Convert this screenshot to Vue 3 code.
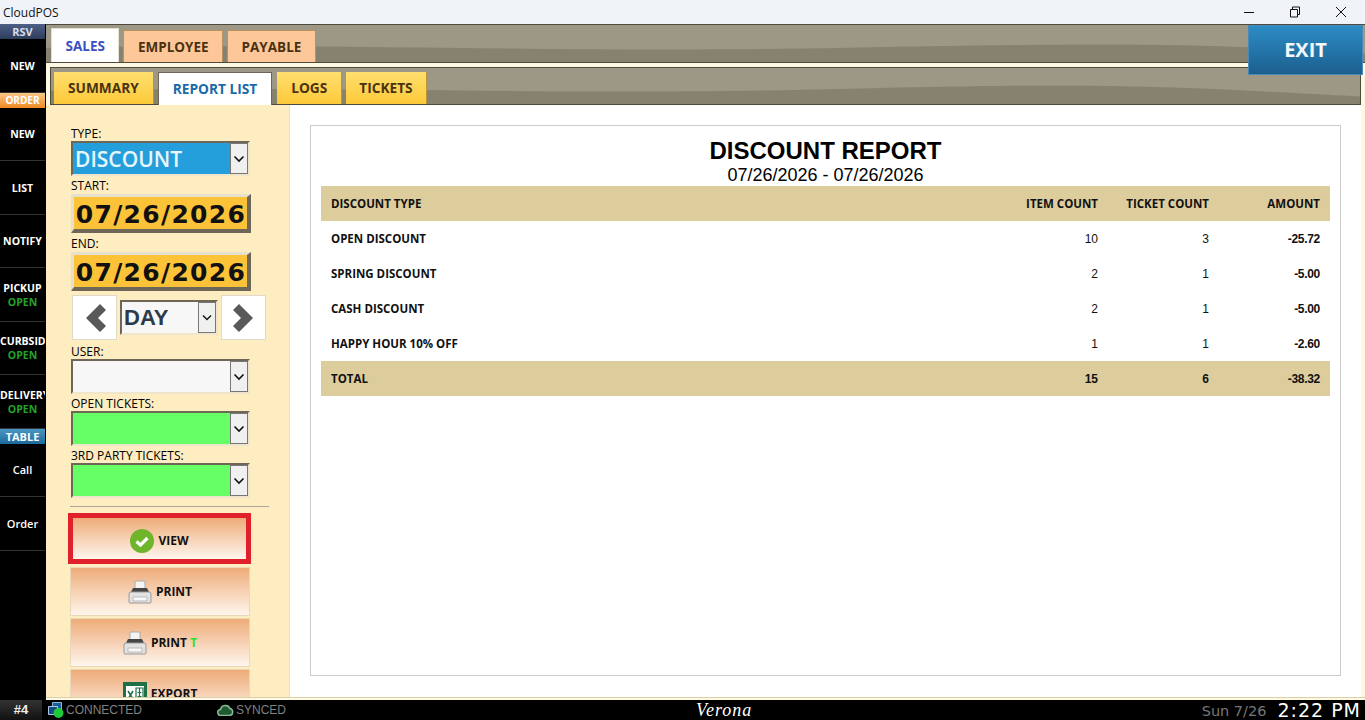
<template>
  <div class="app">
    <div class="titlebar">
      <span class="title">CloudPOS</span>
      <div class="winBtns">
        <svg width="12" height="12" viewBox="0 0 12 12"><path d="M1 6.5h10" stroke="#111" fill="none" /></svg>
        <svg width="12" height="12" viewBox="0 0 12 12"><path d="M1.5 3.5h7a1 1 0 0 1 0 0v7.5h-7zM3.5 3.5v-2.5h7v7.5h-2" stroke="#111" fill="none" /></svg>
        <svg width="12" height="12" viewBox="0 0 12 12"><path d="M1 1l10 10M11 1L1 11" stroke="#111" fill="none" /></svg>
      </div>
    </div>

    <div class="main">
      <div class="sidebar">
        <template v-for="item in sideItems" :key="item.id">
          <div v-if="item.head" class="sideHead" :class="item.head">{{ item.label }}</div>
          <div v-else class="sideItem" :class="{ plain: item.plain }">
            <span class="sideLabel">{{ item.label }}</span>
            <span v-if="item.open" class="sideLabel open">OPEN</span>
          </div>
        </template>
      </div>

      <div class="workspace">
        <div class="barTop">
          <svg class="wave" viewBox="0 0 1315 39" preserveAspectRatio="none"><path d="M0 24C300 18 500 30 800 24S1150 20 1315 30V39H0z" fill="#878170" /></svg>
          <div class="tab" :class="{ active: t === 'SALES', sales: t === 'SALES' }" v-for="t in topTabs" :key="t">{{ t }}</div>
        </div>

        <div class="barSub">
          <svg class="wave" viewBox="0 0 1311 38" preserveAspectRatio="none"><path d="M0 24C300 18 500 30 800 22S1150 22 1311 30V38H0z" fill="#878170" /></svg>
          <div class="subTab" :class="{ active: t === 'REPORT LIST' }" v-for="t in subTabs" :key="t">{{ t }}</div>
        </div>

        <button class="exit">EXIT</button>

        <div class="body">
          <div class="filters">
            <label>TYPE:</label>
            <div class="combo selected">
              <span class="comboText">DISCOUNT</span>
              <span class="arrow"><svg width="12" height="8" viewBox="0 0 12 8"><path d="M1.5 1.5L6 6l4.5-4.5" stroke="#111" stroke-width="1.6" fill="none" /></svg></span>
            </div>
            <label class="start">START:</label>
            <div class="date">07/26/2026</div>
            <label class="end">END:</label>
            <div class="date">07/26/2026</div>

            <div class="stepper">
              <button class="stepBtn">
                <svg width="24" height="32" viewBox="0 0 24 32"><path d="M17 2L3 16l14 14 6-6-8-8 8-8z" fill="#595959" /></svg>
              </button>
              <div class="combo day">
                <span class="comboText">DAY</span>
                <span class="arrow"><svg width="12" height="8" viewBox="0 0 12 8"><path d="M2 1.5L6 5.5l4-4" stroke="#111" stroke-width="1.4" fill="none" /></svg></span>
              </div>
              <button class="stepBtn">
                <svg width="24" height="32" viewBox="0 0 24 32"><path d="M7 2l14 14L7 30l-6-6 8-8-8-8z" fill="#595959" /></svg>
              </button>
            </div>

            <template v-for="f in extraFilters" :key="f.label">
              <label class="extra">{{ f.label }}</label>
              <div class="combo" :class="{ green: f.green }">
                <span class="comboText"></span>
                <span class="arrow"><svg width="12" height="8" viewBox="0 0 12 8"><path d="M1.5 1.5L6 6l4.5-4.5" stroke="#111" stroke-width="1.6" fill="none" /></svg></span>
              </div>
            </template>

            <hr class="rule">

            <button class="action view">
              <svg width="24" height="24" viewBox="0 0 24 24">
                <circle cx="12" cy="12" r="12" fill="#6fb52c" />
                <path d="M6.5 12.5l4 3.5 7-7" stroke="#fff" stroke-width="3.2" fill="none" />
              </svg>
              VIEW
            </button>
            <button class="action">
              <svg width="24" height="24" viewBox="0 0 24 24">
                <path d="M7 1h10v9H7z" fill="#f4f4f4" stroke="#aaa" />
                <path d="M5 8h14l2 4H3z" fill="#444" />
                <path d="M1 14a2 2 0 0 1 2-2h18a2 2 0 0 1 2 2v8a1 1 0 0 1-1 1H2a1 1 0 0 1-1-1z" fill="#e2e2e2" stroke="#999" />
                <path d="M5 17h14v4H5z" fill="#f8f8f8" stroke="#bbb" />
              </svg>
              PRINT
            </button>
            <button class="action">
              <svg width="24" height="24" viewBox="0 0 24 24">
                <path d="M7 1h10v9H7z" fill="#f4f4f4" stroke="#aaa" />
                <path d="M5 8h14l2 4H3z" fill="#444" />
                <path d="M1 14a2 2 0 0 1 2-2h18a2 2 0 0 1 2 2v8a1 1 0 0 1-1 1H2a1 1 0 0 1-1-1z" fill="#e2e2e2" stroke="#999" />
                <path d="M5 17h14v4H5z" fill="#f8f8f8" stroke="#bbb" />
              </svg>
              <span>PRINT <span class="greenT">T</span></span>
            </button>
            <button class="action">
              <svg width="24" height="24" viewBox="0 0 24 24">
                <path d="M0 0h24v24H0z" fill="#1e7145" />
                <path d="M3 4h18v18H3z" fill="#fff" />
                <path d="M13 6h7v14h-7zM14.500 10.500h4M14.500 14.500h4M16.500 6v14" fill="none" stroke="#1e7145" stroke-width="1.200" />
                <path d="M5 9l5 8M10 9l-5 8" stroke="#1e7145" stroke-width="1.600" fill="none" />
              </svg>
              EXPORT
            </button>
          </div>

          <div class="reportArea">
            <div class="report">
              <h1>DISCOUNT REPORT</h1>
              <div class="range">07/26/2026 - 07/26/2026</div>
              <table>
                <thead>
                  <tr>
                    <th class="name">DISCOUNT TYPE</th>
                    <th class="c1">ITEM COUNT</th>
                    <th class="c2">TICKET COUNT</th>
                    <th class="c3">AMOUNT</th>
                  </tr>
                </thead>
                <tbody>
                  <tr v-for="r in rows" :key="r.name">
                    <td class="name">{{ r.name }}</td>
                    <td class="c1 num">{{ r.items }}</td>
                    <td class="c2 num">{{ r.tickets }}</td>
                    <td class="c3 amt">{{ r.amount }}</td>
                  </tr>
                </tbody>
                <tfoot>
                  <tr>
                    <td class="name">TOTAL</td>
                    <td class="c1 tot">15</td>
                    <td class="c2 tot">6</td>
                    <td class="c3 amt">-38.32</td>
                  </tr>
                </tfoot>
              </table>
            </div>
          </div>
        </div>
      </div>
    </div>

    <div class="footer">
      <div class="station">#4</div>
      <svg class="connIcon" width="16" height="16" viewBox="0 0 16 16">
        <path d="M4.500 .5h9v8h-9z" fill="#1c5d9c" stroke="#8fb6dc" />
        <path d="M.5 4.500h9v8h-9z" fill="#174a80" stroke="#a8c8e8" />
        <circle cx="10.500" cy="11" r="5" fill="#1fc93a" />
      </svg>
      <span class="conn">CONNECTED</span>
      <svg class="cloud" width="17" height="12" viewBox="0 0 17 12"><path d="M4 11.500a3 3 0 0 1-.5-6 5 5 0 0 1 9.500-1 3.600 3.600 0 0 1 0 7z" fill="#1e5c30" stroke="#8ab898" stroke-width="1.500" /></svg>
      <span class="conn">SYNCED</span>
      <span class="venue">Verona</span>
      <span class="day2">Sun 7/26</span>
      <span class="time">2:22 PM</span>
    </div>
  </div>
</template>

<script setup>
const sideItems = [
  { id: 1, label: 'RSV', head: 'rsv' },
  { id: 2, label: 'NEW' },
  { id: 3, label: 'ORDER', head: 'order' },
  { id: 4, label: 'NEW' },
  { id: 5, label: 'LIST' },
  { id: 6, label: 'NOTIFY' },
  { id: 7, label: 'PICKUP', open: true },
  { id: 8, label: 'CURBSIDE', open: true },
  { id: 9, label: 'DELIVERY', open: true },
  { id: 10, label: 'TABLE', head: 'table' },
  { id: 11, label: 'Call', plain: true },
  { id: 12, label: 'Order', plain: true },
]

const topTabs = ['SALES', 'EMPLOYEE', 'PAYABLE']
const subTabs = ['SUMMARY', 'REPORT LIST', 'LOGS', 'TICKETS']

const extraFilters = [
  { label: 'USER:', green: false },
  { label: 'OPEN TICKETS:', green: true },
  { label: '3RD PARTY TICKETS:', green: true },
]

const rows = [
  { name: 'OPEN DISCOUNT', items: 10, tickets: 3, amount: '-25.72' },
  { name: 'SPRING DISCOUNT', items: 2, tickets: 1, amount: '-5.00' },
  { name: 'CASH DISCOUNT', items: 2, tickets: 1, amount: '-5.00' },
  { name: 'HAPPY HOUR 10% OFF', items: 1, tickets: 1, amount: '-2.60' },
]
</script>

<style>
html, body {
  margin: 0;
  overflow: hidden;
}
</style>

<style scoped>
.app {
  width: 1365px;
  height: 720px;
  display: flex;
  flex-direction: column;
  overflow: hidden;
  font-family: "Open Sans", "Liberation Sans", sans-serif;
}

.titlebar {
  height: 24px;
  flex: none;
  display: flex;
  align-items: center;
  justify-content: space-between;
  background: #f0f4f9;
  font-size: 12px;
  color: #111;
}

.title {
  margin-left: 3px;
}

.winBtns {
  display: flex;
  gap: 34px;
  margin-right: 18px;
}

.main {
  flex: 1;
  display: flex;
  min-height: 0;
}

.sidebar {
  width: 46px;
  flex: none;
  box-sizing: border-box;
  padding-right: 1px;
  background: #000;
  color: #fff;
  font-size: 10.500px;
  font-weight: 700;
  text-align: center;
  overflow: hidden;
}

.sideHead {
  height: 15px;
  line-height: 15px;
  font-size: 11px;
}

.rsv {
  background: linear-gradient(#4d5f85, #2f3d5c);
  color: #d8deea;
}

.order {
  font-size: 10px;
  background: linear-gradient(#f7c88a, #f08a20);
}

.table {
  background: linear-gradient(#4a97c4, #1c6a9c);
}

.sideItem {
  height: 53.500px;
  box-sizing: border-box;
  border-bottom: 1px solid #333;
  display: flex;
  flex-direction: column;
  justify-content: center;
  padding-top: 1px;
  line-height: 14px;
  overflow: hidden;
}

.sideLabel {
  display: block;
  white-space: nowrap;
}

.sideItem.plain {
  font-size: 11px;
  font-weight: 600;
}

.open {
  color: #20a52a;
}

.workspace {
  flex: 1;
  position: relative;
  display: flex;
  flex-direction: column;
  min-width: 0;
  background: #fff8e2;
}

.barTop {
  position: relative;
  height: 39px;
  flex: none;
  box-sizing: border-box;
  border-top: 1px solid #4e4a3e;
  border-bottom: 1px solid #4e4a3e;
  background: #9d9786;
  display: flex;
  align-items: flex-end;
  gap: 4px;
  padding-left: 5px;
}

.wave {
  position: absolute;
  left: 0;
  top: 0;
  width: 100%;
  height: 100%;
}

.tab {
  position: relative;
  height: 32px;
  line-height: 32px;
  padding: 0 13.500px;
  background: #fdc79a;
  border: 1px solid #b9935f;
  border-bottom: 0;
  box-sizing: border-box;
  font-size: 13.500px;
  font-weight: 700;
  color: #4a3210;
}

.tab.active {
  height: 34px;
  line-height: 34px;
  background: #fff;
  border-color: #e6e0d0;
}

.tab.sales {
  color: #3a50c0;
}

.barSub {
  position: relative;
  height: 38px;
  flex: none;
  box-sizing: border-box;
  margin: 4px 4px 0 4px;
  border: 1px solid #4e4a3e;
  background: #9d9786;
  display: flex;
  align-items: flex-end;
  gap: 4px;
  padding-left: 3px;
}

.subTab {
  position: relative;
  height: 32px;
  line-height: 32px;
  padding: 0 14px;
  box-sizing: border-box;
  background: linear-gradient(#ffdf6e, #fdc93a);
  border-right: 1px solid #b8943a;
  font-size: 13.700px;
  font-weight: 700;
  color: #4a3210;
}

.subTab:first-child {
  padding-left: 15px;
}

.subTab:last-child {
  padding: 0 13px;
}

.subTab.active {
  margin: 0 1px -1px 0;
  height: 33px;
  background: #fff;
  color: #1a6aa8;
  border: 1px solid #6e6555;
  border-bottom: 0;
}

.exit {
  position: absolute;
  top: 1px;
  right: 2px;
  width: 115px;
  height: 50px;
  padding: 0 0 2px;
  border: 1px solid #4a8ab8;
  background: linear-gradient(#2c8cc4, #1c5f8f);
  color: #f2f8fc;
  font-family: inherit;
  font-size: 20px;
  font-weight: 700;
}

.body {
  flex: 1;
  min-height: 0;
  display: flex;
  margin: 0 0 2px 0;
  border-bottom: 1px solid #d9cfa8;
}

.filters {
  width: 244px;
  flex: none;
  box-sizing: border-box;
  padding: 22px 0 0 25px;
  background: #fdedc0;
  border-right: 1px solid #e8e0c8;
  overflow: hidden;
  font-family: "Open Sans", "Liberation Sans", sans-serif;
}

label {
  display: block;
  height: 14px;
  line-height: 14px;
  font-size: 12px;
  color: #000;
}

.combo {
  width: 179px;
  height: 35px;
  box-sizing: border-box;
  display: flex;
  border-top: 2px solid #6e6758;
  border-left: 2px solid #6e6758;
  border-right: 2px solid #f0e6cc;
  border-bottom: 2px solid #f0e6cc;
  background: #f7f7f7;
}

.comboText {
  flex: 1;
  font-family: "Liberation Sans", sans-serif;
  font-size: 22px;
  font-weight: 700;
  line-height: 31px;
  padding-left: 2px;
  color: #2d3a4a;
  background: inherit;
}

.selected .comboText {
  background: #259fdb;
  color: #e8f6ff;
  font-family: "Open Sans", sans-serif;
  font-size: 21px;
  font-weight: 600;
  line-height: 32px;
}

.green .comboText {
  background: #66ff66;
}

.arrow {
  width: 18px;
  flex: none;
  box-sizing: border-box;
  border: 1px solid #777;
  background: #f0f0f0;
  display: flex;
  align-items: center;
  justify-content: center;
}

.start {
  margin-top: 3px;
}

.date {
  width: 180px;
  height: 39px;
  margin-top: 1px;
  padding-left: 1px;
  box-sizing: border-box;
  border-top: 3px solid #e6e0cc;
  border-left: 3px solid #e6e0cc;
  border-right: 4px solid #6e6758;
  border-bottom: 4px solid #6e6758;
  background: #fcc338;
  font-family: "DejaVu Sans", sans-serif;
  font-size: 25px;
  font-weight: 700;
  line-height: 35px;
  letter-spacing: 1.300px;
  text-align: center;
  color: #111;
  white-space: nowrap;
}

.end {
  margin-top: 4px;
}

.stepper {
  display: flex;
  align-items: center;
  gap: 3px;
  margin: 4px 0 5px 1px;
  height: 45px;
}

.stepBtn {
  width: 45px;
  height: 45px;
  padding: 0;
  box-sizing: border-box;
  border: 1px solid #e0dac8;
  background: #fff;
  display: flex;
  align-items: center;
  justify-content: center;
}

.day {
  width: 98px;
}

.extra {
  margin-top: 3px;
}

.rule {
  width: 199px;
  margin: 8px 0 6px -1px;
  border: 0;
  border-top: 1px solid #aaa69a;
  height: 0;
}

.action {
  display: flex;
  align-items: center;
  justify-content: center;
  gap: 4px;
  width: 180px;
  height: 49px;
  margin: 0 0 2px -1px;
  padding: 0;
  box-sizing: border-box;
  border: 1px solid #e8d8b8;
  background: linear-gradient(#eeab78, #fff6ee);
  font-family: "Open Sans", "Liberation Sans", sans-serif;
  font-size: 12px;
  font-weight: 700;
  color: #111;
}

.action.view {
  width: 183px;
  height: 51px;
  margin: 0 0 3px -3px;
  padding-top: 4px;
  border: 5px solid #e0202a;
}

.greenT {
  color: #2ee02e;
}

.reportArea {
  flex: 1;
  min-width: 0;
  background: #fff;
  margin-right: 4px;
  padding: 20px 20px 21px 20px;
  display: flex;
}

.report {
  flex: 1;
  box-sizing: border-box;
  border: 1px solid #ccc;
  padding: 11px 10px 0 10px;
  font-family: "Liberation Sans", sans-serif;
}

h1 {
  margin: 0;
  height: 28px;
  line-height: 28px;
  font-size: 24px;
  font-weight: 700;
  text-align: center;
  color: #000;
}

.range {
  height: 21px;
  line-height: 21px;
  font-size: 18px;
  text-align: center;
  color: #000;
}

table {
  width: 100%;
  border-collapse: collapse;
  font-family: "Open Sans", "Liberation Sans", sans-serif;
  font-size: 11.500px;
  color: #111;
}

th, td {
  height: 35px;
  padding: 0;
  text-align: right;
  font-weight: 700;
}

thead tr, tfoot tr {
  background: #ddcd9c;
}

.name {
  text-align: left;
  padding-left: 10px;
}

.c1 {
  width: 100px;
}

.c2 {
  width: 111px;
}

.c3 {
  width: 111px;
  padding-right: 10px;
}

.num, .tot, .amt {
  font-family: "Liberation Sans", sans-serif;
  font-size: 12px;
}

.num {
  font-weight: 400;
}

.amt {
  letter-spacing: -0.300px;
}

.footer {
  height: 20px;
  flex: none;
  background: #000;
  display: flex;
  align-items: center;
  font-family: "Liberation Sans", sans-serif;
}

.station {
  width: 42px;
  height: 20px;
  line-height: 20px;
  text-align: center;
  background: linear-gradient(#333, #111);
  color: #eee;
  font-size: 13px;
  font-weight: 700;
}

.connIcon {
  margin-left: 6px;
}

.conn {
  margin-left: 2px;
  font-size: 12px;
  color: #808080;
}

.cloud {
  margin-left: 75px;
}

.venue {
  margin-left: 410px;
  width: 56px;
  font-family: "Liberation Serif", serif;
  font-style: italic;
  font-size: 18px;
  letter-spacing: 1px;
  color: #fff;
  white-space: nowrap;
}

.day2 {
  margin-left: auto;
  padding-top: 3px;
  font-family: "DejaVu Sans", sans-serif;
  font-size: 14.500px;
  line-height: 17px;
  color: #777;
}

.time {
  margin: 0 4px 0 11px;
  font-family: "DejaVu Sans", sans-serif;
  font-size: 19px;
  line-height: 20px;
  letter-spacing: 1px;
  color: #fff;
}
</style>
